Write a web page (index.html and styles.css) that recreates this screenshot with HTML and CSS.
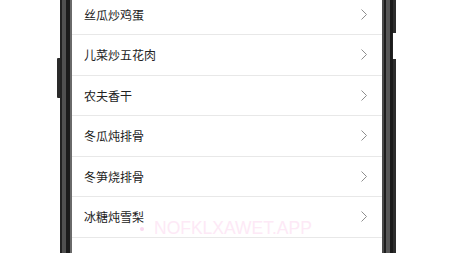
FILE: index.html
```html
<!DOCTYPE html>
<html lang="zh-CN">
<head>
<meta charset="utf-8">
<title>菜谱</title>
<link rel="stylesheet" href="styles.css">
</head>
<body>
<div class="stage">
  <div class="frame-left"><span class="side-btn"></span></div>
  <div class="screen">
    <ul class="list">
      <li class="row"><span class="label">丝瓜炒鸡蛋</span><svg class="chev" viewBox="0 0 6 11" width="6" height="11"><polyline points="0.5,0.5 5.5,5.5 0.5,10.5"/></svg></li>
      <li class="row"><span class="label">儿菜炒五花肉</span><svg class="chev" viewBox="0 0 6 11" width="6" height="11"><polyline points="0.5,0.5 5.5,5.5 0.5,10.5"/></svg></li>
      <li class="row"><span class="label">农夫香干</span><svg class="chev" viewBox="0 0 6 11" width="6" height="11"><polyline points="0.5,0.5 5.5,5.5 0.5,10.5"/></svg></li>
      <li class="row"><span class="label">冬瓜炖排骨</span><svg class="chev" viewBox="0 0 6 11" width="6" height="11"><polyline points="0.5,0.5 5.5,5.5 0.5,10.5"/></svg></li>
      <li class="row"><span class="label">冬笋烧排骨</span><svg class="chev" viewBox="0 0 6 11" width="6" height="11"><polyline points="0.5,0.5 5.5,5.5 0.5,10.5"/></svg></li>
      <li class="row"><span class="label">冰糖炖雪梨</span><svg class="chev" viewBox="0 0 6 11" width="6" height="11"><polyline points="0.5,0.5 5.5,5.5 0.5,10.5"/></svg></li>
      <li class="row"></li>
    </ul>
    <div class="watermark"><span class="dot"></span>NOFKLXAWET.APP</div>
  </div>
  <div class="frame-right"><span class="side-notch"></span></div>
</div>
</body>
</html>
```
FILE: styles.css
```css
html, body {
  margin: 0;
  padding: 0;
  background: #ffffff;
}
body {
  width: 451px;
  height: 253px;
  overflow: hidden;
  font-family: "Noto Sans CJK SC", "Noto Sans", sans-serif;
}
.stage {
  display: flex;
  height: 253px;
  padding-left: 60px;
}
.frame-left {
  position: relative;
  width: 12px;
  flex: none;
  background: linear-gradient(to right, #222 0, #222 2px, #505050 2px, #505050 6px, #1b1b1b 6px, #1b1b1b 10px, #6a6a6a 10px, #6a6a6a 12px);
}
.side-btn {
  position: absolute;
  left: -3px;
  top: 58px;
  width: 3px;
  height: 40px;
  background: #2a2a2a;
  border-radius: 1px 0 0 1px;
}
.screen {
  position: relative;
  width: 310px;
  flex: none;
  overflow: hidden;
  background: #fff;
}
.list {
  list-style: none;
  margin: -5.5px 0 0;
  padding: 0;
}
.row {
  display: flex;
  align-items: center;
  justify-content: space-between;
  height: 39.5px;
  padding: 0 15px 0 12px;
  border-bottom: 1px solid #e8e8e8;
  font-size: 12px;
  color: #222;
}
.chev {
  display: block;
  fill: none;
  stroke: #8e8e8e;
  stroke-width: 1;
}
.watermark {
  position: absolute;
  left: 68px;
  top: 218px;
  display: flex;
  align-items: center;
  gap: 10px;
  font-family: "Liberation Sans", Arial, sans-serif;
  font-size: 17.5px;
  color: #fde9f6;
  letter-spacing: 0;
}
.dot {
  width: 4px;
  height: 4px;
  border-radius: 50%;
  background: #f8d9ef;
}
.frame-right {
  position: relative;
  width: 14px;
  flex: none;
  background: linear-gradient(to right, #4a4a4a 0, #4a4a4a 2px, #1e1e1e 2px, #1e1e1e 4px, #575757 4px, #575757 8px, #1a1a1a 8px, #1a1a1a 11px, #2c2c2c 11px, #2c2c2c 14px);
}
.side-notch {
  position: absolute;
  right: 0;
  top: 33px;
  width: 3px;
  height: 26px;
  background: #fff;
  border-left: 1px solid #222;
}
```
